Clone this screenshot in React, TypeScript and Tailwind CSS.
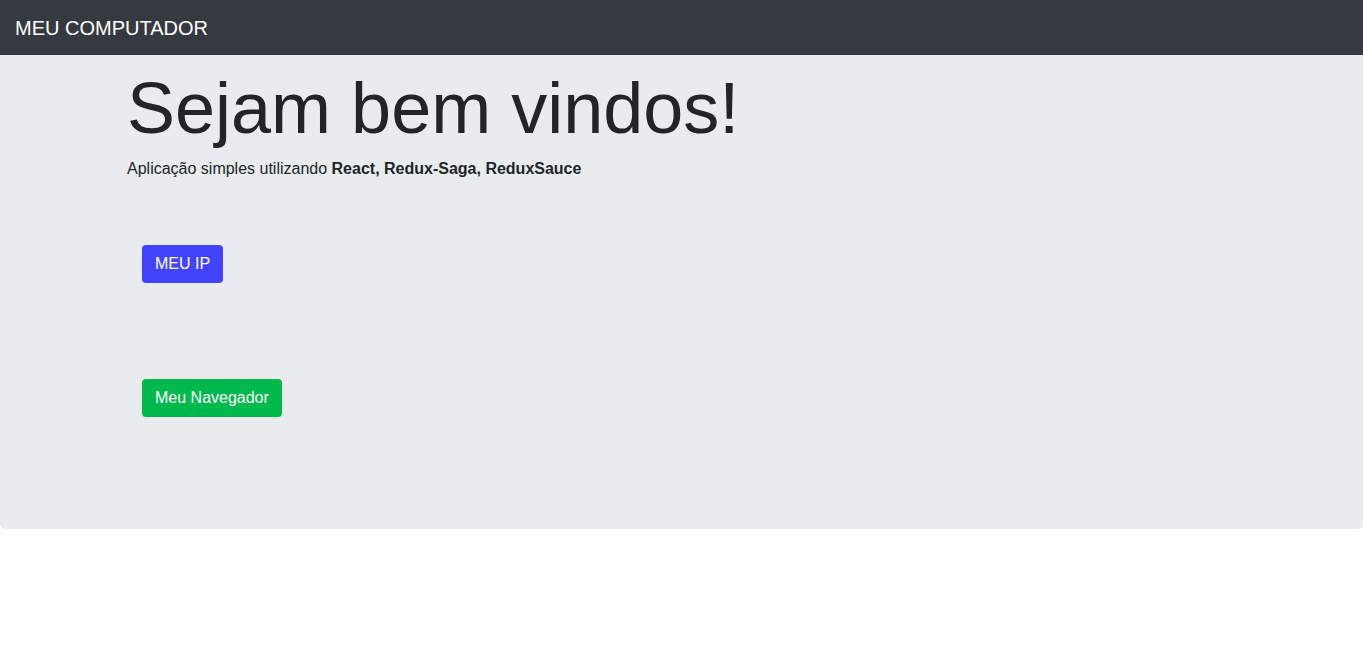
import React from "react";

export default function App() {
  return (
    <div className="min-h-[671px] bg-white" style={{ fontFamily: '"Liberation Sans", Arial, sans-serif' }}>
      <nav className="h-[55px] bg-[#343a40] flex items-center px-[15px]">
        <span className="text-white text-[20px] leading-[30px]">MEU COMPUTADOR</span>
      </nav>
      <div className="bg-[#e9ecef] rounded-b-[5px] h-[474px]">
        <div className="w-[1139px] mx-auto px-[15px] pt-[10px]">
          <h1 className="text-[72px] leading-[86px] font-light text-[#212529]">Sejam bem vindos!</h1>
          <p className="mt-[6px] text-[16px] leading-[24px] text-[#212529]">
            Aplicação simples utilizando <b>React, Redux-Saga, ReduxSauce</b>
          </p>
          <div className="pl-[15px] flex flex-col items-start">
            <button className="mt-[64px] h-[38px] px-[13px] rounded-[4px] bg-[#4343fd] text-white text-[16px] leading-[24px]">
              MEU IP
            </button>
            <button className="mt-[96px] h-[38px] px-[13px] rounded-[4px] bg-[#00b94c] text-white text-[16px] leading-[24px]">
              Meu Navegador
            </button>
          </div>
        </div>
      </div>
    </div>
  );
}
